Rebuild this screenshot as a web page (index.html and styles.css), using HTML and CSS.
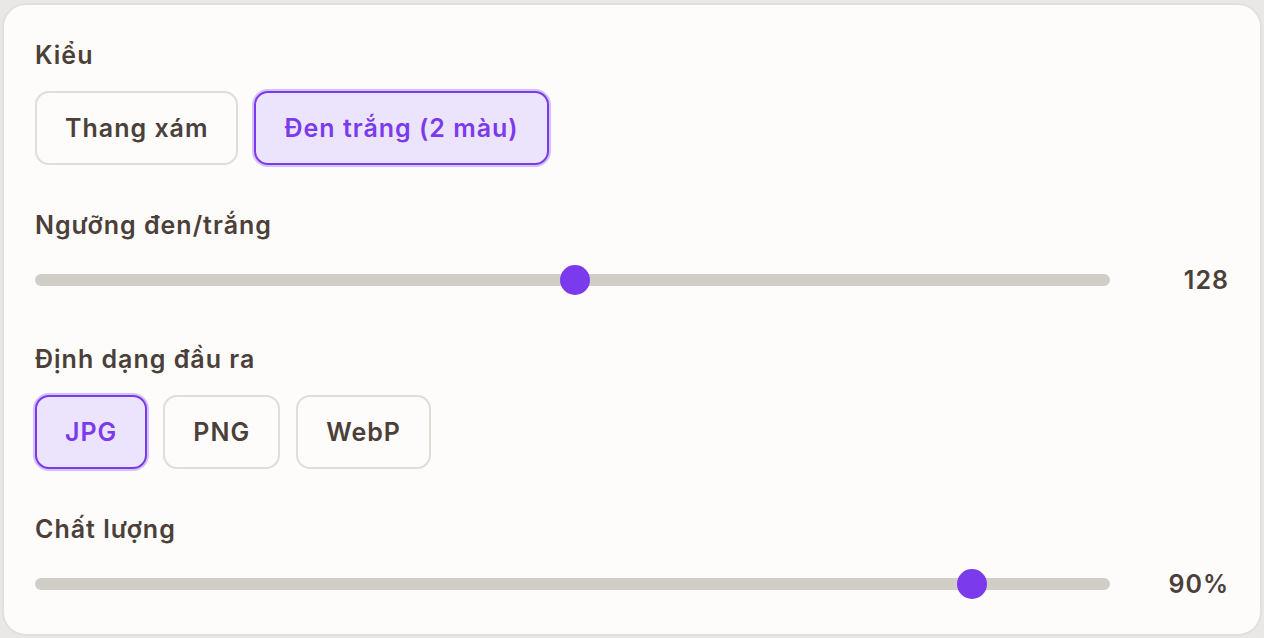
FILE: index.html
```html
<!DOCTYPE html>
<html lang="vi">
<head>
    <meta charset="UTF-8">
    <meta name="viewport" content="width=device-width, initial-scale=1.0">
    <title>Chuyển ảnh đen trắng</title>
    <link rel="stylesheet" href="styles.css">
</head>
<body>

<!-- Options panel -->
<div class="panel">

    <div class="field">
        <div class="field-label">Kiểu</div>
        <div class="choice-group">
            <button class="choice">Thang xám</button>
            <button class="choice active">Đen trắng (2 màu)</button>
        </div>
    </div>

    <div class="field">
        <div class="field-label">Ngưỡng đen/trắng</div>
        <div class="slider-row">
            <input type="range" class="slider" min="0" max="255" value="128">
            <span class="slider-value">128</span>
        </div>
    </div>

    <div class="field">
        <div class="field-label">Định dạng đầu ra</div>
        <div class="choice-group">
            <button class="choice active">JPG</button>
            <button class="choice">PNG</button>
            <button class="choice">WebP</button>
        </div>
    </div>

    <div class="field">
        <div class="field-label">Chất lượng</div>
        <div class="slider-row">
            <input type="range" class="slider" min="15" max="100" value="90">
            <span class="slider-value">90%</span>
        </div>
    </div>

</div>

</body>
</html>
```

FILE: styles.css
```css
* {
    box-sizing: border-box;
}

body {
    margin: 0;
    padding: 3px 2px 2px 2px;
    background-color: #eae8e6;
    font-family: Inter, "Noto Sans", sans-serif;
    color: #4b4039;
}

/* Card holding all the options */
.panel {
    background-color: #fdfcfb;
    border: 2px solid #e2dfdc;
    border-radius: 24px;
    padding: 34px 31px 31px 31px;
    display: flex;
    flex-direction: column;
    gap: 44px;
}

.field {
    display: flex;
    flex-direction: column;
}

.field-label {
    font-size: 25px;
    line-height: 32px;
    font-weight: 600;
    letter-spacing: 1px;
    margin-bottom: 20px;
}

/* Toggle buttons */
.choice-group {
    display: flex;
    gap: 16px;
}

.choice {
    font-family: inherit;
    font-size: 25px;
    line-height: 32px;
    font-weight: 600;
    letter-spacing: 1px;
    color: #4b4039;
    background-color: #fdfcfb;
    border: 2px solid #e0dcd8;
    border-radius: 14px;
    padding: 19px 28px;
    cursor: pointer;
}

.choice.active {
    color: #7c3aed;
    background-color: #ebe4fc;
    border-color: #7c3aed;
    box-shadow: 0 0 0 2px rgba(124, 58, 237, 0.3);
}

/* Sliders */
.slider-row {
    display: flex;
    align-items: center;
    gap: 24px;
    height: 38px;
}

.slider {
    -webkit-appearance: none;
    appearance: none;
    flex: 1;
    margin: 0;
    height: 30px;
    background: transparent;
}

.slider::-webkit-slider-runnable-track {
    height: 12px;
    background-color: #d1cdc9;
    border-radius: 6px;
}

.slider::-webkit-slider-thumb {
    -webkit-appearance: none;
    width: 30px;
    height: 30px;
    margin-top: -9px;
    border-radius: 50%;
    background-color: #7c3aed;
    border: none;
}

.slider-value {
    width: 95px;
    text-align: right;
    font-size: 25px;
    line-height: 32px;
    font-weight: 600;
    letter-spacing: 1px;
}
```
